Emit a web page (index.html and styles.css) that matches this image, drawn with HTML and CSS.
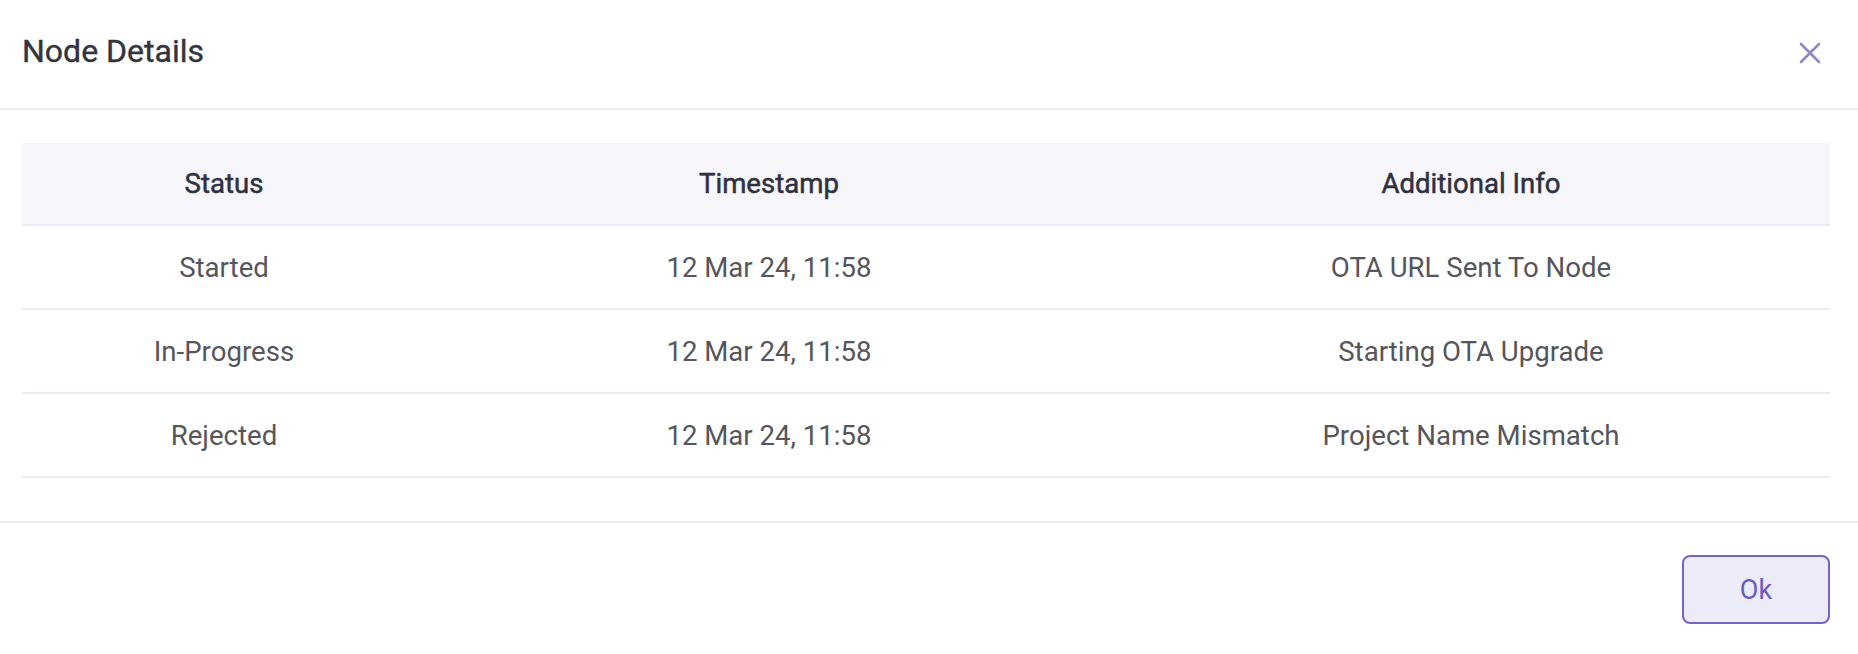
FILE: index.html
```html
<!DOCTYPE html>
<html lang="en">
<head>
    <meta charset="UTF-8">
    <meta name="viewport" content="width=device-width, initial-scale=1.0">
    <title>Node Details</title>
    <link rel="stylesheet" href="styles.css">
</head>
<body>
    <div class="modal">
        <header class="modal-header">
            <h2 class="modal-title">Node Details</h2>
            <button class="close-btn" aria-label="Close">
                <svg width="22" height="22" viewBox="0 0 22 22">
                    <path d="M2 2 L20 20 M20 2 L2 20" stroke="#8d8bb9" stroke-width="2.6" stroke-linecap="round" fill="none"/>
                </svg>
            </button>
        </header>

        <div class="modal-body">
            <table class="details-table">
                <colgroup>
                    <col class="col-status">
                    <col class="col-time">
                    <col class="col-info">
                </colgroup>
                <thead>
                    <tr>
                        <th>Status</th>
                        <th>Timestamp</th>
                        <th>Additional Info</th>
                    </tr>
                </thead>
                <tbody>
                    <tr>
                        <td>Started</td>
                        <td>12 Mar 24, 11:58</td>
                        <td>OTA URL Sent To Node</td>
                    </tr>
                    <tr>
                        <td>In-Progress</td>
                        <td>12 Mar 24, 11:58</td>
                        <td>Starting OTA Upgrade</td>
                    </tr>
                    <tr>
                        <td>Rejected</td>
                        <td>12 Mar 24, 11:58</td>
                        <td>Project Name Mismatch</td>
                    </tr>
                </tbody>
            </table>
        </div>

        <footer class="modal-footer">
            <button class="button">Ok</button>
        </footer>
    </div>
</body>
</html>
```

FILE: styles.css
```css
body {
    margin: 0;
    font-family: Roboto, 'Liberation Sans', sans-serif;
    background: #ffffff;
    color: #55565c;
    -webkit-font-smoothing: antialiased;
}
.modal {
    width: 1858px;
    height: 654px;
    background: #fff;
}
.modal-header {
    height: 110px;
    padding: 0 28px 0 22px;
    display: flex;
    justify-content: space-between;
    align-items: center;
    border-bottom: 2px solid #ebedf6;
    box-sizing: border-box;
}
.modal-title {
    margin: 0 0 6px;
    font-size: 32px;
    font-weight: 400;
    color: #33343d;
    -webkit-text-stroke: 0.4px #33343d;
}
.close-btn {
    background: none;
    border: 0;
    padding: 0;
    margin: 0 9px 2px 0;
    cursor: pointer;
    display: flex;
}
.modal-body {
    padding: 33px 28px 43px 22px;
    border-bottom: 2px solid #ebedf6;
}
.details-table {
    width: 100%;
    border-collapse: collapse;
    table-layout: fixed;
    font-size: 27.6px;
}
.col-status { width: 404px; }
.col-time { width: 686px; }
.details-table th {
    background: #f6f6fb;
    height: 81px;
    font-weight: 400;
    color: #2f3141;
    -webkit-text-stroke: 0.5px #2f3141;
    border-bottom: 2px solid #ebedf6;
    padding: 0;
}
.details-table td {
    height: 82px;
    text-align: center;
    color: #55565c;
    border-bottom: 2px solid #ebedf6;
    padding: 0;
}
.modal-footer {
    display: flex;
    justify-content: flex-end;
    padding: 32px 28px 0 0;
}
.button {
    width: 148px;
    height: 69px;
    background: #ecebf8;
    border: 2px solid #7563c9;
    border-radius: 8px;
    color: #6b5ac2;
    font-family: Roboto, 'Liberation Sans', sans-serif;
    font-size: 27px;
    cursor: pointer;
}
```
